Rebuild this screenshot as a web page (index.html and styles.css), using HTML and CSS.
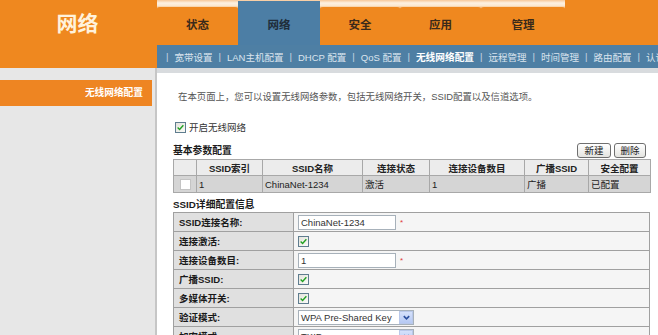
FILE: index.html
```html
<!DOCTYPE html>
<html lang="zh-CN">
<head>
<meta charset="utf-8">
<title>无线网络配置</title>
<link rel="stylesheet" href="styles.css">
</head>
<body>
<div class="page">
  <header class="top">
    <div class="logo">网络</div>
    <div class="nav">
      <div class="tabs">
        <div class="tab-group">
          <div class="tab w81">状态</div>
          <div class="tab w82 active">网络</div>
          <div class="tab w80">安全</div>
          <div class="tab w81">应用</div>
          <div class="tab w84">管理</div>
        </div>
      </div>
      <div class="subnav">
        <span class="sep">|</span><span>宽带设置</span>
        <span class="sep">|</span><span>LAN主机配置</span>
        <span class="sep">|</span><span>DHCP 配置</span>
        <span class="sep">|</span><span>QoS 配置</span>
        <span class="sep">|</span><span class="cur">无线网络配置</span>
        <span class="sep">|</span><span>远程管理</span>
        <span class="sep">|</span><span>时间管理</span>
        <span class="sep">|</span><span>路由配置</span>
        <span class="sep">|</span><span>认证配置</span>
      </div>
    </div>
  </header>
  <div class="body">
    <aside class="side">
      <div class="side-item">无线网络配置</div>
    </aside>
    <main class="content">
      <p class="desc">在本页面上，您可以设置无线网络参数，包括无线网络开关，SSID配置以及信道选项。</p>
      <div class="enable">
        <span class="cb"><svg viewBox="0 0 11 11" width="9" height="9"><path d="M2 5.6 L4.4 8 L9 2.8" fill="none" stroke="#21a121" stroke-width="1.7"/></svg></span>
        <span>开启无线网络</span>
      </div>
      <div class="bar">
        <span class="h2">基本参数配置</span>
        <div class="btns">
          <button class="btn b34">新建</button>
          <button class="btn b32">删除</button>
        </div>
      </div>
      <table class="t1">
        <colgroup>
          <col class="c23"><col class="c66"><col class="c100"><col class="c67"><col class="c95"><col class="c64"><col class="c62">
        </colgroup>
        <tr>
          <th></th><th>SSID索引</th><th>SSID名称</th><th>连接状态</th><th>连接设备数目</th><th>广播SSID</th><th>安全配置</th>
        </tr>
        <tr>
          <td class="ctr"><span class="cb white"></span></td><td>1</td><td>ChinaNet-1234</td><td>激活</td><td>1</td><td>广播</td><td>已配置</td>
        </tr>
      </table>
      <div class="h2 sub">SSID详细配置信息</div>
      <table class="t2">
        <colgroup><col class="c120"><col></colgroup>
        <tr>
          <td class="lab">SSID连接名称:</td>
          <td class="val"><input class="inp" type="text" value="ChinaNet-1234"><span class="req">*</span></td>
        </tr>
        <tr>
          <td class="lab">连接激活:</td>
          <td class="val"><span class="cb"><svg viewBox="0 0 11 11" width="9" height="9"><path d="M2 5.6 L4.4 8 L9 2.8" fill="none" stroke="#21a121" stroke-width="1.7"/></svg></span></td>
        </tr>
        <tr>
          <td class="lab">连接设备数目:</td>
          <td class="val"><input class="inp" type="text" value="1"><span class="req">*</span></td>
        </tr>
        <tr>
          <td class="lab">广播SSID:</td>
          <td class="val"><span class="cb"><svg viewBox="0 0 11 11" width="9" height="9"><path d="M2 5.6 L4.4 8 L9 2.8" fill="none" stroke="#21a121" stroke-width="1.7"/></svg></span></td>
        </tr>
        <tr>
          <td class="lab">多媒体开关:</td>
          <td class="val"><span class="cb"><svg viewBox="0 0 11 11" width="9" height="9"><path d="M2 5.6 L4.4 8 L9 2.8" fill="none" stroke="#21a121" stroke-width="1.7"/></svg></span></td>
        </tr>
        <tr>
          <td class="lab">验证模式:</td>
          <td class="val"><span class="sel"><span class="sel-txt">WPA Pre-Shared Key</span><span class="sel-btn"><svg viewBox="0 0 10 10" width="9" height="9"><path d="M2 3.5 L5 6.5 L8 3.5" fill="none" stroke="#2b4f9e" stroke-width="1.8"/></svg></span></span></td>
        </tr>
        <tr>
          <td class="lab">加密模式:</td>
          <td class="val"><span class="sel"><span class="sel-txt">TKIP</span><span class="sel-btn"><svg viewBox="0 0 10 10" width="9" height="9"><path d="M2 3.5 L5 6.5 L8 3.5" fill="none" stroke="#2b4f9e" stroke-width="1.8"/></svg></span></span></td>
        </tr>
      </table>
    </main>
  </div>
</div>
</body>
</html>
```
FILE: styles.css
```css
* { box-sizing: border-box; }
html, body { margin: 0; padding: 0; }
body {
  width: 658px;
  height: 335px;
  overflow: hidden;
  font-family: "Liberation Sans", "Noto Sans CJK SC", sans-serif;
  font-size: 9.5px;
  color: #222;
  background: #fff;
}
.page { width: 658px; }

/* header */
.top { display: flex; height: 68px; }
.logo {
  flex: 0 0 157px;
  width: 157px;
  background: #ef881f;
  color: #fff2dc;
  font-family: "Noto Sans CJK SC", sans-serif;
  font-size: 21px;
  font-weight: bold;
  text-align: center;
  padding-top: 8px;
  line-height: 28px;
  padding-right: 2px;
}
.nav { flex: 1; min-width: 0; display: flex; flex-direction: column; }
.tabs { height: 45px; background: #ef881f; display: flex; }
.tab-group {
  display: flex;
  background: linear-gradient(to bottom, #f7c899 0, #fdf1e2 3px, #fbe6cd 6px, #ef881f 9px);
}
.tab {
  margin-top: 7px;
  background: #ef881f;
  border-radius: 3px 3px 0 0;
  font-family: "Noto Sans CJK SC", sans-serif;
  font-weight: bold;
  font-size: 11.5px;
  color: #3a2a1a;
  text-align: center;
  padding-top: 8px;
  line-height: 18px;
}
.tab.active {
  margin-top: 1px;
  background: #4c7ea5;
  color: #1f2d3a;
  padding-top: 14px;
  border-radius: 0;
}
.w80 { width: 80px; }
.w81 { width: 81px; }
.w82 { width: 82px; }
.w84 { width: 84px; }
.subnav {
  height: 23px;
  background: #4e7fa4;
  display: flex;
  align-items: center;
  gap: 6px;
  padding-left: 9px;
  white-space: nowrap;
  overflow: hidden;
  color: #dbe4ee;
  font-size: 9.5px;
}
.subnav .sep { color: #c9d6e3; }
.subnav .cur { color: #fff; font-weight: bold; font-size: 9.7px; }

/* body */
.body { display: flex; height: 267px; }
.side {
  flex: 0 0 157px;
  width: 157px;
  background: #e7e7e7;
  border-right: 2px solid #c6c6c6;
  padding-top: 12px;
}
.side-item {
  width: 152px;
  height: 26px;
  background: #ee8522;
  color: #fff;
  font-weight: bold;
  font-size: 9.7px;
  text-align: right;
  padding-right: 9px;
  line-height: 26px;
}
.content {
  flex: 1;
  min-width: 0;
  border-top: 5px solid #d8dbde;
  padding: 0 8px 0 16px;
}
.desc {
  margin: 18px 0 0 5px;
  line-height: 12px;
  color: #555;
  font-size: 9.4px;
}
.enable {
  display: flex;
  align-items: center;
  gap: 3px;
  height: 12px;
  margin: 18px 0 0 2px;
  color: #333;
}
.cb {
  width: 11px;
  height: 11px;
  border: 1px solid #5f7d8f;
  background: linear-gradient(135deg, #e3e3dc, #fbfbf8);
  display: inline-flex;
  align-items: center;
  justify-content: center;
  vertical-align: middle;
}
.cb.white { background: #fff; border-color: #c4c4c4; }
.bar {
  display: flex;
  justify-content: space-between;
  align-items: center;
  height: 16px;
  margin-top: 9px;
  padding-right: 4px;
}
.h2 { font-weight: bold; font-size: 9.8px; color: #1a1a1a; }
.btns { display: flex; gap: 3px; }
.btn {
  height: 15px;
  padding: 0;
  margin: 0;
  border: 1px solid #6f6f6f;
  border-radius: 3px;
  background: linear-gradient(#ffffff, #e4e4e0);
  font-family: "Noto Sans CJK SC", sans-serif;
  font-size: 9.5px;
  line-height: 13px;
  color: #222;
}
.b34 { width: 34px; }
.b32 { width: 32px; }

table { border-collapse: collapse; table-layout: fixed; width: 477px; }
.c23 { width: 23px; } .c66 { width: 66px; } .c100 { width: 100px; }
.c67 { width: 67px; } .c95 { width: 95px; } .c64 { width: 64px; }
.c62 { width: 62px; } .c120 { width: 120px; }
.t1 { margin-top: 1px; }
.t1 th, .t1 td { border: 1px solid #a8a8a8; padding: 0 2px; font-size: 9.5px; white-space: nowrap; overflow: hidden; }
.t1 th { height: 16px; background: #ececec; font-weight: bold; text-align: center; color: #222; }
.t1 td { height: 17px; background: #d5d5d5; color: #222; }
.t1 td.ctr { text-align: center; padding: 0; }
.h2.sub { margin-top: 5px; line-height: 14px; height: 14px; }
.t2 { margin-top: 0; }
.t2 td { border: 1px solid #a0a0a0; height: 19px; padding: 0; vertical-align: middle; }
.t2 .lab { background: #e0e0e0; font-weight: bold; padding-left: 5px; color: #1a1a1a; }
.t2 .val { background: #f5f5f5; padding-left: 4px; }
.inp {
  width: 98px;
  height: 15px;
  margin: 0;
  padding: 0 2px;
  border: 1px solid #a7b1ba;
  background: #fff;
  font-family: "Liberation Sans", sans-serif;
  font-size: 9.5px;
  color: #333;
  outline: none;
  vertical-align: middle;
}
.req { color: #e03a3a; font-size: 8px; margin-left: 4px; vertical-align: middle; }
.sel {
  display: inline-flex;
  align-items: center;
  width: 116px;
  height: 15px;
  border: 1px solid #a7b1ba;
  background: #fff;
  vertical-align: middle;
}
.sel-txt { flex: 1; padding-left: 2px; color: #333; font-size: 9.5px; }
.sel-btn {
  width: 14px;
  height: 13px;
  background: linear-gradient(#d5e1fb, #b6c9f3);
  border: 1px solid #b9c8ea;
  display: flex;
  align-items: center;
  justify-content: center;
}
```
